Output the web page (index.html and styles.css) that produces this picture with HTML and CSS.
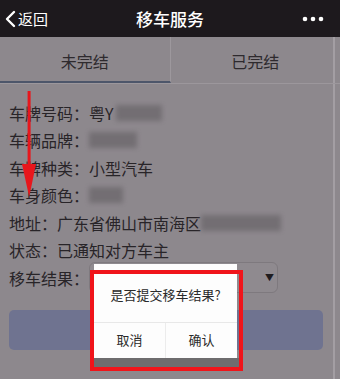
FILE: index.html
```html
<!DOCTYPE html>
<html lang="zh">
<head>
<meta charset="utf-8">
<link rel="stylesheet" href="styles.css">
</head>
<body>
<div class="screen">
  <header class="header">
    <div class="back">
      <svg class="chev" width="12" height="18" viewBox="0 0 12 18"><polyline points="10,2 3,9 10,16" fill="none" stroke="#fff" stroke-width="2.4" stroke-linecap="round" stroke-linejoin="round"/></svg>
      <span>返回</span>
    </div>
    <div class="title">移车服务</div>
    <svg class="dots" width="24" height="6" viewBox="0 0 24 6"><circle cx="3" cy="3" r="2.3" fill="#fff"/><circle cx="11" cy="3" r="2.3" fill="#fff"/><circle cx="19" cy="3" r="2.3" fill="#fff"/></svg>
  </header>
  <div class="main">
    <nav class="tabs">
      <div class="tab active">未完结</div>
      <div class="tab">已完结</div>
    </nav>
    <div class="info">
      <div class="row"><span class="label">车牌号码：</span><span>粤Y</span><span class="blur b1"></span></div>
      <div class="row"><span class="label">车辆品牌：</span><span class="blur b2"></span></div>
      <div class="row"><span class="label">车牌种类：</span><span>小型汽车</span></div>
      <div class="row"><span class="label">车身颜色：</span><span class="blur b3"></span></div>
      <div class="row"><span class="label">地址：</span><span>广东省佛山市南海区</span><span class="blur b4"></span></div>
      <div class="row"><span class="label">状态：</span><span>已通知对方车主</span></div>
      <div class="row"><span class="label">移车结果：</span><div class="select"><span class="caret">▼</span></div></div>
    </div>
    <div class="submit"></div>
  </div>
  <div class="dialog">
    <div class="dlg-msg">是否提交移车结果?</div>
    <div class="dlg-btns"><div class="dlg-btn">取消</div><div class="dlg-btn">确认</div></div>
  </div>
  <div class="shade"></div>
  <div class="redframe"></div>
  <svg class="arrow" width="40" height="200" viewBox="0 0 40 200"><rect x="27.6" y="91" width="3" height="78" fill="#e8161c"/><polygon points="22,164 36,164 29.2,197" fill="#e8161c"/></svg>
</div>
</body>
</html>
```
FILE: styles.css
```css
* { box-sizing: border-box; }
html, body { margin: 0; padding: 0; }
body {
  width: 340px;
  height: 379px;
  overflow: hidden;
  background: #8d888d;
  font-family: "Noto Sans CJK SC", "Noto Sans", sans-serif;
}
.screen { position: relative; width: 340px; height: 379px; overflow: hidden; }
.header {
  height: 37px;
  background: #1d191d;
  display: flex;
  align-items: center;
  justify-content: space-between;
  padding: 0 14px 0 4px;
  color: #fff;
  position: relative;
}
.back { display: flex; align-items: center; font-size: 15px; gap: 2px; }
.chev { display: block; }
.title {
  position: absolute;
  left: 0; right: 0;
  text-align: center;
  font-size: 17px;
  font-weight: 500;
  line-height: 37px;
  pointer-events: none;
}
.dots { display: block; }
.main {
  height: 342px;
  background: linear-gradient(to right, transparent 333px, #a39ea3 333px, #a39ea3 335px, transparent 335px);
}
.tabs {
  display: flex;
  height: 47px;
  border-bottom: 1px solid #9c979c;
}
.tab {
  flex: 1;
  display: flex;
  align-items: center;
  justify-content: center;
  font-size: 16px;
  color: #2e2a2e;
  padding-top: 3px;
  border-bottom: 2px solid transparent;
}
.tab.active {
  border-bottom-color: #4d566a;
  border-right: 1px solid #9d989d;
}
.info { padding: 15px 0 0 9px; }
.row {
  height: 27.5px;
  display: flex;
  align-items: center;
  font-size: 16px;
  color: #282428;
  white-space: nowrap;
}
.label { display: inline-block; }
.blur {
  display: inline-block;
  height: 16px;
  background: #6f6a6f;
  filter: blur(2.5px);
  opacity: 0.85;
}
.b1 { width: 46px; margin-left: 2px; }
.b2 { width: 48px; }
.b3 { width: 34px; }
.b4 { width: 80px; }
.select {
  width: 189px;
  height: 31px;
  border: 1px solid #7e797e;
  border-radius: 6px;
  background: #8f8a8f;
  display: flex;
  align-items: center;
  justify-content: flex-end;
  padding-right: 3px;
  flex: none;
}
.caret { font-size: 9px; color: #1f1c1f; }
.submit {
  margin: 18px 17px 0 9px;
  height: 40px;
  border-radius: 5px;
  background: #6f7390;
}
.dialog {
  position: absolute;
  left: 94px;
  top: 264px;
  width: 143px;
  height: 94px;
  background: #fdfdfd;
  display: flex;
  flex-direction: column;
  font-size: 13px;
  color: #2a2a2a;
}
.dlg-msg {
  height: 59px;
  display: flex;
  align-items: center;
  justify-content: center;
  padding-top: 3px;
  border-bottom: 1px solid #e8e8e8;
}
.dlg-btns { flex: 1; display: flex; }
.dlg-btn {
  flex: 1;
  display: flex;
  align-items: center;
  justify-content: center;
  padding-bottom: 2px;
}
.dlg-btn + .dlg-btn { border-left: 1px solid #ececec; }
.shade {
  position: absolute;
  left: 90px;
  top: 358px;
  width: 153px;
  height: 12px;
  background: #6e6c6e;
}
.redframe {
  position: absolute;
  left: 90px;
  top: 270px;
  width: 153px;
  height: 101px;
  border: 4px solid #f0141a;
}
.arrow { position: absolute; left: 0; top: 0; }
```
